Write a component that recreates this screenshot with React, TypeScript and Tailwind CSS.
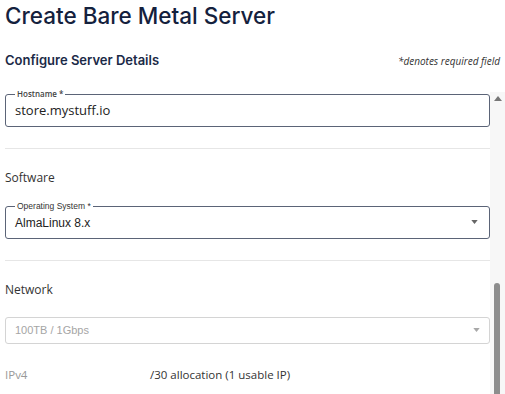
import React from 'react';

function Caret({ className, w = 8, h = 5 }: { className: string; w?: number; h?: number }) {
  return (
    <svg className={className} width={w} height={h} viewBox="0 0 8 5">
      <path d="M0 0h8L4 5z" fill="currentColor" />
    </svg>
  );
}

export default function App() {
  return (
    <div className="w-[505px] h-[394px] overflow-hidden bg-white flex font-['Open_Sans',sans-serif]">
      {/* Content */}
      <div className="w-[490px] shrink-0 pl-[5px]">
        <h1 className="font-['Inter',sans-serif] text-[22.5px] leading-[30px] font-medium text-[#14213d] pt-[1px]">
          Create Bare Metal Server
        </h1>

        <div className="flex items-baseline justify-between mt-[20px]">
          <h2 className="font-['Inter',sans-serif] text-[13px] font-semibold text-[#1b2a47]">
            Configure Server Details
          </h2>
          <span className="text-[10px] italic text-[#333] mr-[-10px]">*denotes required field</span>
        </div>

        {/* Hostname */}
        <div className="relative mt-[23px] h-[33px] border-[1.5px] border-[#5b6477] rounded-[3px] flex items-center pl-[9px]">
          <span className="absolute -top-[6px] left-[9px] px-[2px] bg-white text-[8px] leading-[10px] font-semibold text-[#444]">
            Hostname *
          </span>
          <span className="text-[13px] text-[#222] pt-[2px]">store.mystuff.io</span>
        </div>

        <div className="mt-[21px] h-px bg-[#e6e6e6]" />

        <div className="mt-[20px] text-[12px] text-[#333]">Software</div>

        {/* Operating system */}
        <div className="relative mt-[19px] h-[33px] border-[1.5px] border-[#5b6477] rounded-[3px] flex items-center justify-between pl-[9px] pr-[11px]">
          <span className="absolute -top-[6px] left-[9px] px-[2px] bg-white text-[8.5px] leading-[10px] font-['Liberation_Sans',sans-serif] text-[#333]">
            Operating System *
          </span>
          <span className="text-[12px] font-['Liberation_Sans',sans-serif] text-[#222] pt-[2px]">AlmaLinux 8.x</span>
          <Caret className="text-[#666]" w={7} h={4} />
        </div>

        <div className="mt-[21px] h-px bg-[#e6e6e6]" />

        <div className="mt-[20px] text-[12px] text-[#333]">Network</div>

        {/* Bandwidth (disabled) */}
        <div className="mt-[18px] h-[27px] border border-[#d4d4d4] rounded-[3px] flex items-center justify-between pl-[9px] pr-[9px]">
          <span className="text-[11px] font-['Liberation_Sans',sans-serif] text-[#a5a5a5]">100TB / 1Gbps</span>
          <Caret className="text-[#a8a8a8]" w={7} h={4} />
        </div>

        <div className="mt-[22px] flex text-[11.5px]">
          <span className="w-[145px] text-[#999]">IPv4</span>
          <span className="text-[#333]">/30 allocation (1 usable IP)</span>
        </div>
      </div>

      {/* Scrollbar */}
      <div className="flex-1 flex flex-col items-center">
        <div className="h-[92px] w-full" />
        <div className="flex-1 w-full bg-[#f7f7f7] flex flex-col items-center pt-[4px]">
          <Caret className="text-[#777] rotate-180" />
          <div className="flex-1" />
          <div className="w-[6px] h-[111px] bg-[#8d8d8d] rounded-t-[3px] mr-[1px]" />
        </div>
      </div>
    </div>
  );
}
